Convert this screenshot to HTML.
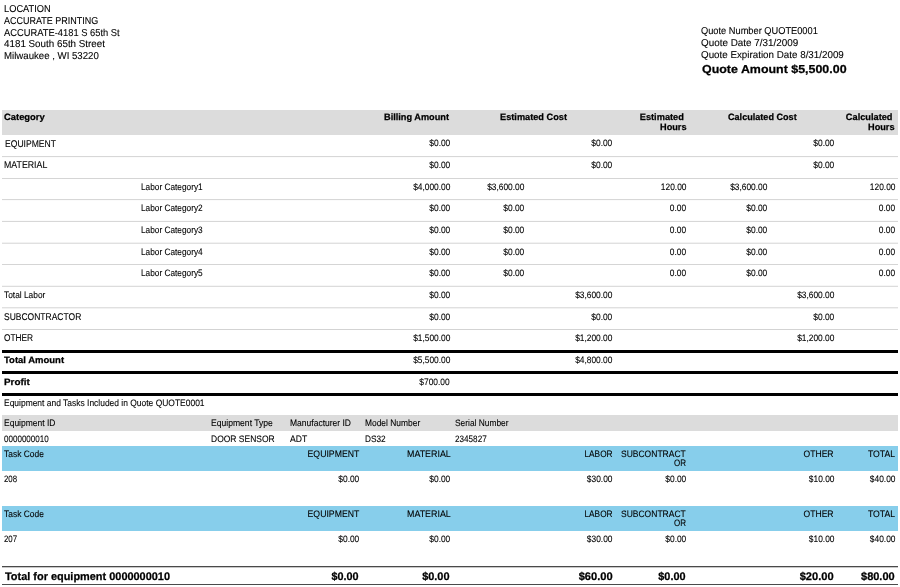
<!DOCTYPE html><html><head><meta charset="utf-8"><style>
html,body{margin:0;padding:0;background:#fff;width:900px;height:587px;overflow:hidden;position:relative}#w{left:0;top:0;width:900px;height:587px;will-change:transform;background:#fff}
div{position:absolute}
.t{transform-origin:0 50%;font-family:"Liberation Sans",sans-serif;color:#000;white-space:nowrap;line-height:20px;height:20px;text-rendering:geometricPrecision;}
.addr{font-size:10.0px;font-weight:400;-webkit-text-stroke:0.1px #000}
.qa{font-size:11.6px;font-weight:700;-webkit-text-stroke:0.25px #000}
.hdr{font-size:9.2px;font-weight:700;-webkit-text-stroke:0.25px #000}
.lbl{font-size:9.8px;font-weight:400;-webkit-text-stroke:0.1px #000}
.num{font-size:9.3px;font-weight:400;-webkit-text-stroke:0.1px #000}
.sm{font-size:9.3px;font-weight:400;-webkit-text-stroke:0.1px #000}
.tot{font-size:11.0px;font-weight:700;-webkit-text-stroke:0.25px #000}
.bnum{font-size:11.0px;font-weight:700;-webkit-text-stroke:0.25px #000}
</style></head><body><div id="w">
<div style="left:2px;top:110px;width:896px;height:25px;background:#dcdcdc"></div>
<div style="left:2px;top:156px;width:896px;height:1px;background:#d7d7d7"></div>
<div style="left:2px;top:157px;width:896px;height:1px;background:#fbfbfb"></div>
<div style="left:2px;top:178px;width:896px;height:1px;background:#d5d5d5"></div>
<div style="left:2px;top:199px;width:896px;height:1px;background:#d7d7d7"></div>
<div style="left:2px;top:200px;width:896px;height:1px;background:#fbfbfb"></div>
<div style="left:2px;top:220px;width:896px;height:1px;background:#fbfbfb"></div>
<div style="left:2px;top:221px;width:896px;height:1px;background:#d7d7d7"></div>
<div style="left:2px;top:242px;width:896px;height:1px;background:#f2f2f2"></div>
<div style="left:2px;top:243px;width:896px;height:1px;background:#e0e0e0"></div>
<div style="left:2px;top:264px;width:896px;height:1px;background:#d5d5d5"></div>
<div style="left:2px;top:285px;width:896px;height:1px;background:#f6f6f6"></div>
<div style="left:2px;top:286px;width:896px;height:1px;background:#dcdcdc"></div>
<div style="left:2px;top:307px;width:896px;height:1px;background:#e0e0e0"></div>
<div style="left:2px;top:308px;width:896px;height:1px;background:#f2f2f2"></div>
<div style="left:2px;top:329px;width:896px;height:1px;background:#d3d3d3"></div>
<div style="left:2px;top:350px;width:896px;height:3px;background:#000"></div>
<div style="left:2px;top:371px;width:896px;height:3px;background:#000"></div>
<div style="left:2px;top:393px;width:896px;height:3px;background:#000"></div>
<div style="left:2px;top:415px;width:896px;height:15.5px;background:#dcdcdc"></div>
<div style="left:2px;top:445.9px;width:896px;height:24.8px;background:#87ceeb"></div>
<div style="left:2px;top:506px;width:896px;height:24.8px;background:#87ceeb"></div>
<div style="left:2px;top:566px;width:896px;height:1px;background:#4a4a4a"></div>
<div style="left:2px;top:567px;width:896px;height:1px;background:#c8c8c8"></div>
<div style="left:2px;top:584px;width:896px;height:1px;background:#4a4a4a"></div>
<div class="t addr" style="left:3.90px;top:0px;transform:scaleX(0.9290)">LOCATION</div>
<div class="t addr" style="left:3.90px;top:12px;transform:scaleX(0.8987)">ACCURATE PRINTING</div>
<div class="t addr" style="left:3.90px;top:24px;transform:scaleX(0.9341)">ACCURATE-4181 S 65th St</div>
<div class="t addr" style="left:3.90px;top:35px;transform:scaleX(0.9820)">4181 South 65th Street</div>
<div class="t addr" style="left:3.90px;top:47px;transform:scaleX(0.9636)">Milwaukee , WI 53220</div>
<div class="t addr" style="left:701.20px;top:22px;transform:scaleX(0.9258)">Quote Number QUOTE0001</div>
<div class="t addr" style="left:701.20px;top:34px;transform:scaleX(0.9887)">Quote Date 7/31/2009</div>
<div class="t addr" style="left:701.20px;top:46px;transform:scaleX(0.9804)">Quote Expiration Date 8/31/2009</div>
<div class="t qa" style="left:702.00px;top:60px;transform:scaleX(1.0717)">Quote Amount $5,500.00</div>
<div class="t hdr" style="left:4.30px;top:107px;transform:scaleX(1.0220)">Category</div>
<div class="t hdr" style="left:384.28px;top:107px;transform:scaleX(0.9997);transform-origin:100% 50%">Billing Amount</div>
<div class="t hdr" style="left:500.00px;top:107px;transform:scaleX(1.0018)">Estimated Cost</div>
<div class="t hdr" style="left:639.89px;top:107px;transform:scaleX(1.0066);transform-origin:100% 50%">Estimated</div>
<div class="t hdr" style="left:659.76px;top:117px;transform:scaleX(0.9983);transform-origin:100% 50%">Hours</div>
<div class="t hdr" style="left:728.00px;top:107px;transform:scaleX(0.9895)">Calculated Cost</div>
<div class="t hdr" style="left:845.74px;top:107px;transform:scaleX(1.0030);transform-origin:100% 50%">Calculated</div>
<div class="t hdr" style="left:868.16px;top:117px;transform:scaleX(0.9983);transform-origin:100% 50%">Hours</div>
<div class="t lbl" style="left:4.60px;top:135px;transform:scaleX(0.8757)">EQUIPMENT</div>
<div class="t num" style="left:426.74px;top:133px;transform:scaleX(0.9000);transform-origin:100% 50%">$0.00</div>
<div class="t num" style="left:589.34px;top:133px;transform:scaleX(0.9000);transform-origin:100% 50%">$0.00</div>
<div class="t num" style="left:810.74px;top:133px;transform:scaleX(0.9000);transform-origin:100% 50%">$0.00</div>
<div class="t lbl" style="left:4.30px;top:156px;transform:scaleX(0.8971)">MATERIAL</div>
<div class="t num" style="left:426.74px;top:155px;transform:scaleX(0.9000);transform-origin:100% 50%">$0.00</div>
<div class="t num" style="left:589.34px;top:155px;transform:scaleX(0.9000);transform-origin:100% 50%">$0.00</div>
<div class="t num" style="left:810.74px;top:155px;transform:scaleX(0.9000);transform-origin:100% 50%">$0.00</div>
<div class="t sm" style="left:140.80px;top:177px;transform:scaleX(0.8909)">Labor Category1</div>
<div class="t num" style="left:408.64px;top:177px;transform:scaleX(0.9000);transform-origin:100% 50%">$4,000.00</div>
<div class="t num" style="left:482.64px;top:177px;transform:scaleX(0.9000);transform-origin:100% 50%">$3,600.00</div>
<div class="t num" style="left:657.86px;top:177px;transform:scaleX(0.9000);transform-origin:100% 50%">120.00</div>
<div class="t num" style="left:725.84px;top:177px;transform:scaleX(0.9000);transform-origin:100% 50%">$3,600.00</div>
<div class="t num" style="left:866.96px;top:177px;transform:scaleX(0.9000);transform-origin:100% 50%">120.00</div>
<div class="t sm" style="left:140.80px;top:198px;transform:scaleX(0.8909)">Labor Category2</div>
<div class="t num" style="left:426.74px;top:198px;transform:scaleX(0.9000);transform-origin:100% 50%">$0.00</div>
<div class="t num" style="left:500.74px;top:198px;transform:scaleX(0.9000);transform-origin:100% 50%">$0.00</div>
<div class="t num" style="left:668.21px;top:198px;transform:scaleX(0.9000);transform-origin:100% 50%">0.00</div>
<div class="t num" style="left:743.94px;top:198px;transform:scaleX(0.9000);transform-origin:100% 50%">$0.00</div>
<div class="t num" style="left:877.31px;top:198px;transform:scaleX(0.9000);transform-origin:100% 50%">0.00</div>
<div class="t sm" style="left:140.80px;top:220px;transform:scaleX(0.8909)">Labor Category3</div>
<div class="t num" style="left:426.74px;top:220px;transform:scaleX(0.9000);transform-origin:100% 50%">$0.00</div>
<div class="t num" style="left:500.74px;top:220px;transform:scaleX(0.9000);transform-origin:100% 50%">$0.00</div>
<div class="t num" style="left:668.21px;top:220px;transform:scaleX(0.9000);transform-origin:100% 50%">0.00</div>
<div class="t num" style="left:743.94px;top:220px;transform:scaleX(0.9000);transform-origin:100% 50%">$0.00</div>
<div class="t num" style="left:877.31px;top:220px;transform:scaleX(0.9000);transform-origin:100% 50%">0.00</div>
<div class="t sm" style="left:140.80px;top:242px;transform:scaleX(0.8909)">Labor Category4</div>
<div class="t num" style="left:426.74px;top:242px;transform:scaleX(0.9000);transform-origin:100% 50%">$0.00</div>
<div class="t num" style="left:500.74px;top:242px;transform:scaleX(0.9000);transform-origin:100% 50%">$0.00</div>
<div class="t num" style="left:668.21px;top:242px;transform:scaleX(0.9000);transform-origin:100% 50%">0.00</div>
<div class="t num" style="left:743.94px;top:242px;transform:scaleX(0.9000);transform-origin:100% 50%">$0.00</div>
<div class="t num" style="left:877.31px;top:242px;transform:scaleX(0.9000);transform-origin:100% 50%">0.00</div>
<div class="t sm" style="left:140.80px;top:263px;transform:scaleX(0.8909)">Labor Category5</div>
<div class="t num" style="left:426.74px;top:263px;transform:scaleX(0.9000);transform-origin:100% 50%">$0.00</div>
<div class="t num" style="left:500.74px;top:263px;transform:scaleX(0.9000);transform-origin:100% 50%">$0.00</div>
<div class="t num" style="left:668.21px;top:263px;transform:scaleX(0.9000);transform-origin:100% 50%">0.00</div>
<div class="t num" style="left:743.94px;top:263px;transform:scaleX(0.9000);transform-origin:100% 50%">$0.00</div>
<div class="t num" style="left:877.31px;top:263px;transform:scaleX(0.9000);transform-origin:100% 50%">0.00</div>
<div class="t sm" style="left:4.30px;top:285px;transform:scaleX(0.8979)">Total Labor</div>
<div class="t num" style="left:426.74px;top:285px;transform:scaleX(0.9000);transform-origin:100% 50%">$0.00</div>
<div class="t num" style="left:571.24px;top:285px;transform:scaleX(0.9000);transform-origin:100% 50%">$3,600.00</div>
<div class="t num" style="left:792.64px;top:285px;transform:scaleX(0.9000);transform-origin:100% 50%">$3,600.00</div>
<div class="t lbl" style="left:4.30px;top:308px;transform:scaleX(0.8677)">SUBCONTRACTOR</div>
<div class="t num" style="left:426.74px;top:307px;transform:scaleX(0.9000);transform-origin:100% 50%">$0.00</div>
<div class="t num" style="left:589.34px;top:307px;transform:scaleX(0.9000);transform-origin:100% 50%">$0.00</div>
<div class="t num" style="left:810.74px;top:307px;transform:scaleX(0.9000);transform-origin:100% 50%">$0.00</div>
<div class="t lbl" style="left:4.30px;top:329px;transform:scaleX(0.8487)">OTHER</div>
<div class="t num" style="left:408.64px;top:328px;transform:scaleX(0.9000);transform-origin:100% 50%">$1,500.00</div>
<div class="t num" style="left:571.24px;top:328px;transform:scaleX(0.9000);transform-origin:100% 50%">$1,200.00</div>
<div class="t num" style="left:792.64px;top:328px;transform:scaleX(0.9000);transform-origin:100% 50%">$1,200.00</div>
<div class="t hdr" style="left:4.30px;top:350px;transform:scaleX(1.0322)">Total Amount</div>
<div class="t num" style="left:408.64px;top:350px;transform:scaleX(0.9000);transform-origin:100% 50%">$5,500.00</div>
<div class="t num" style="left:571.24px;top:350px;transform:scaleX(0.9000);transform-origin:100% 50%">$4,800.00</div>
<div class="t hdr" style="left:4.30px;top:372px;transform:scaleX(1.0756)">Profit</div>
<div class="t num" style="left:416.39px;top:372px;transform:scaleX(0.9000);transform-origin:100% 50%">$700.00</div>
<div class="t sm" style="left:4.20px;top:393px;transform:scaleX(0.9095)">Equipment and Tasks Included in Quote QUOTE0001</div>
<div class="t sm" style="left:4.20px;top:413px;transform:scaleX(0.9143)">Equipment ID</div>
<div class="t sm" style="left:210.70px;top:413px;transform:scaleX(0.9228)">Equipment Type</div>
<div class="t sm" style="left:289.90px;top:413px;transform:scaleX(0.9152)">Manufacturer ID</div>
<div class="t sm" style="left:364.60px;top:413px;transform:scaleX(0.9054)">Model Number</div>
<div class="t sm" style="left:455.20px;top:413px;transform:scaleX(0.9004)">Serial Number</div>
<div class="t sm" style="left:4.20px;top:429px;transform:scaleX(0.8645)">0000000010</div>
<div class="t sm" style="left:210.70px;top:429px;transform:scaleX(0.9134)">DOOR SENSOR</div>
<div class="t sm" style="left:289.90px;top:429px;transform:scaleX(0.9250)">ADT</div>
<div class="t sm" style="left:364.60px;top:429px;transform:scaleX(0.8901)">DS32</div>
<div class="t sm" style="left:455.20px;top:429px;transform:scaleX(0.8759)">2345827</div>
<div class="t sm" style="left:4.30px;top:444px;transform:scaleX(0.9084)">Task Code</div>
<div class="t sm" style="left:303.53px;top:444px;transform:scaleX(0.9354);transform-origin:100% 50%">EQUIPMENT</div>
<div class="t sm" style="left:405.00px;top:444px;transform:scaleX(0.9563);transform-origin:100% 50%">MATERIAL</div>
<div class="t sm" style="left:581.28px;top:444px;transform:scaleX(0.8884);transform-origin:100% 50%">LABOR</div>
<div class="t sm" style="left:615.24px;top:444px;transform:scaleX(0.9158);transform-origin:100% 50%">SUBCONTRACT</div>
<div class="t sm" style="left:672.05px;top:453px;transform:scaleX(0.8605);transform-origin:100% 50%">OR</div>
<div class="t sm" style="left:801.46px;top:444px;transform:scaleX(0.9220);transform-origin:100% 50%">OTHER</div>
<div class="t sm" style="left:866.10px;top:444px;transform:scaleX(0.9346);transform-origin:100% 50%">TOTAL</div>
<div class="t sm" style="left:4.10px;top:469px;transform:scaleX(0.8445)">208</div>
<div class="t num" style="left:335.54px;top:469px;transform:scaleX(0.9000);transform-origin:100% 50%">$0.00</div>
<div class="t num" style="left:427.14px;top:469px;transform:scaleX(0.9000);transform-origin:100% 50%">$0.00</div>
<div class="t num" style="left:584.36px;top:469px;transform:scaleX(0.9000);transform-origin:100% 50%">$30.00</div>
<div class="t num" style="left:662.74px;top:469px;transform:scaleX(0.9000);transform-origin:100% 50%">$0.00</div>
<div class="t num" style="left:805.56px;top:469px;transform:scaleX(0.9000);transform-origin:100% 50%">$10.00</div>
<div class="t num" style="left:866.76px;top:469px;transform:scaleX(0.9000);transform-origin:100% 50%">$40.00</div>
<div class="t sm" style="left:4.30px;top:504px;transform:scaleX(0.9084)">Task Code</div>
<div class="t sm" style="left:303.53px;top:504px;transform:scaleX(0.9354);transform-origin:100% 50%">EQUIPMENT</div>
<div class="t sm" style="left:405.00px;top:504px;transform:scaleX(0.9563);transform-origin:100% 50%">MATERIAL</div>
<div class="t sm" style="left:581.28px;top:504px;transform:scaleX(0.8884);transform-origin:100% 50%">LABOR</div>
<div class="t sm" style="left:615.24px;top:504px;transform:scaleX(0.9158);transform-origin:100% 50%">SUBCONTRACT</div>
<div class="t sm" style="left:672.05px;top:513px;transform:scaleX(0.8605);transform-origin:100% 50%">OR</div>
<div class="t sm" style="left:801.46px;top:504px;transform:scaleX(0.9220);transform-origin:100% 50%">OTHER</div>
<div class="t sm" style="left:866.10px;top:504px;transform:scaleX(0.9346);transform-origin:100% 50%">TOTAL</div>
<div class="t sm" style="left:4.10px;top:529px;transform:scaleX(0.8445)">207</div>
<div class="t num" style="left:335.54px;top:529px;transform:scaleX(0.9000);transform-origin:100% 50%">$0.00</div>
<div class="t num" style="left:427.14px;top:529px;transform:scaleX(0.9000);transform-origin:100% 50%">$0.00</div>
<div class="t num" style="left:584.36px;top:529px;transform:scaleX(0.9000);transform-origin:100% 50%">$30.00</div>
<div class="t num" style="left:662.74px;top:529px;transform:scaleX(0.9000);transform-origin:100% 50%">$0.00</div>
<div class="t num" style="left:805.56px;top:529px;transform:scaleX(0.9000);transform-origin:100% 50%">$10.00</div>
<div class="t num" style="left:866.76px;top:529px;transform:scaleX(0.9000);transform-origin:100% 50%">$40.00</div>
<div class="t tot" style="left:4.90px;top:567px;transform:scaleX(0.9935)">Total for equipment 0000000010</div>
<div class="t bnum" style="left:331.37px;top:567px;transform:scaleX(0.9845);transform-origin:100% 50%">$0.00</div>
<div class="t bnum" style="left:422.07px;top:567px;transform:scaleX(0.9954);transform-origin:100% 50%">$0.00</div>
<div class="t bnum" style="left:579.16px;top:567px;transform:scaleX(1.0106);transform-origin:100% 50%">$60.00</div>
<div class="t bnum" style="left:658.47px;top:567px;transform:scaleX(0.9881);transform-origin:100% 50%">$0.00</div>
<div class="t bnum" style="left:800.36px;top:567px;transform:scaleX(1.0106);transform-origin:100% 50%">$20.00</div>
<div class="t bnum" style="left:861.16px;top:567px;transform:scaleX(0.9987);transform-origin:100% 50%">$80.00</div>
</div></body></html>
